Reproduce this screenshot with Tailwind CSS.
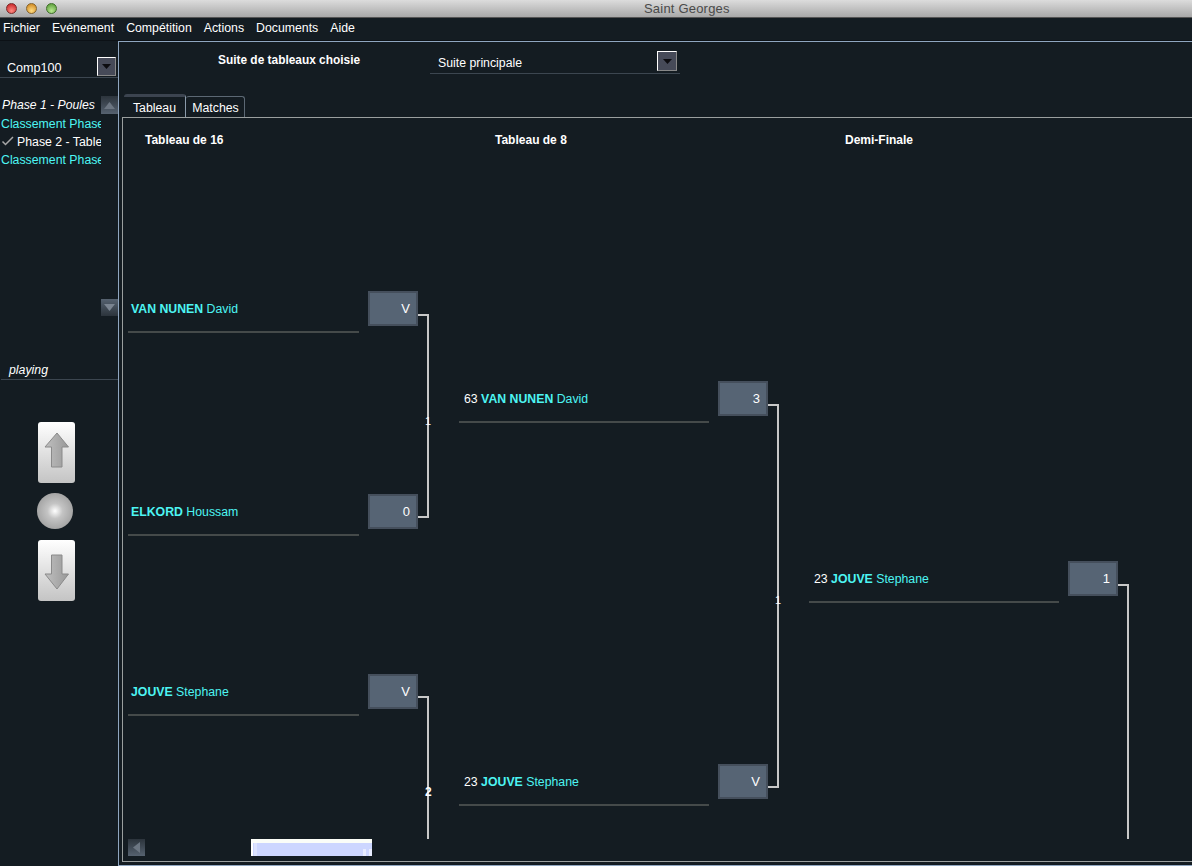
<!DOCTYPE html>
<html lang="fr">
<head>
<meta charset="utf-8">
<title>Saint Georges</title>
<script src="https://cdn.jsdelivr.net/npm/@tailwindcss/browser@4"></script>
</head>
<body class="m-0 bg-[#141c22]">
<div class="w-[1192px] h-[866px] overflow-hidden flex flex-col bg-[#141c22] text-white text-[12.3px] font-['Liberation_Sans',Arial,sans-serif]">
  <!-- title bar -->
  <header class="relative h-[18px] shrink-0 flex items-center bg-gradient-to-b from-[#dcdcdc] to-[#a9a9a9] border-b border-[#555]">
    <div class="flex gap-[9px] pl-[6px]">
      <span class="w-[11px] h-[11px] rounded-full border border-[#7a2a2a] bg-[radial-gradient(circle_at_50%_75%,#ff8a80,#c0181c)]"></span>
      <span class="w-[11px] h-[11px] rounded-full border border-[#86642c] bg-[radial-gradient(circle_at_50%_75%,#ffdc80,#c87c14)]"></span>
      <span class="w-[11px] h-[11px] rounded-full border border-[#3f6f2a] bg-[radial-gradient(circle_at_50%_75%,#b8e890,#4f9430)]"></span>
    </div>
    <span class="ml-[587px] text-[13px] tracking-[0.2px] text-[#4a4a4a]">Saint Georges</span>
  </header>
  <!-- menu bar -->
  <nav class="h-[23px] shrink-0 flex items-center gap-[12px] pl-[3px] pb-[2px] bg-[#141c22] border-b border-[#0c1116]">
    <span>Fichier</span><span>Evénement</span><span>Compétition</span><span>Actions</span><span>Documents</span><span>Aide</span>
  </nav>
  <div class="flex flex-1 min-h-0">
    <!-- sidebar -->
    <aside class="w-[118px] shrink-0 flex flex-col">
      <div class="h-[37px] flex items-end border-b border-[#3c4650] relative">
        <span class="ml-[7px] mb-[1px] text-[12.6px] leading-[16px]">Comp100</span>
        <button class="absolute left-[97px] top-[16px] w-[19px] h-[19px] bg-[#464a58] border-[1.5px] border-t-white border-l-white border-r-[#888] border-b-[#888] flex items-center justify-center">
          <svg width="9" height="5" viewBox="0 0 9 5"><path d="M0 0H9L4.500 5Z" fill="#0c0c10"/></svg>
        </button>
      </div>
      <div class="relative h-[220px] mt-[18px] pr-[17px]">
        <div class="w-[101px] overflow-hidden whitespace-nowrap leading-[18px]">
          <div class="italic pl-[2px] h-[19px] text-[12.2px]">Phase 1 - Poules</div>
          <div class="text-[#4df5f3] pl-[1px]">Classement Phase 1</div>
          <div class="flex items-center pl-[1px]">
            <svg width="13" height="10" viewBox="0 0 13 10" class="shrink-0 mr-[3px] mb-[2px]"><path d="M1.500 5.500L4.500 8.500L12 1" fill="none" stroke="#a8a8a8" stroke-width="1.500"/></svg>
            <span>Phase 2 - Tableau</span>
          </div>
          <div class="text-[#4df5f3] pl-[1px]">Classement Phase 2</div>
        </div>
        <div class="absolute right-0 top-0 w-[17px] h-[18px] flex items-center justify-center bg-gradient-to-b from-[#2c343c] to-[#566270]">
          <svg width="11" height="7" viewBox="0 0 11 7"><path d="M0 7H11L5.500 0Z" fill="#6c7682"/></svg>
        </div>
        <div class="absolute right-0 top-[203px] w-[17px] h-[17px] flex items-center justify-center bg-gradient-to-b from-[#566270] to-[#2c343c]">
          <svg width="11" height="7" viewBox="0 0 11 7"><path d="M0 0H11L5.500 7Z" fill="#7a8490"/></svg>
        </div>
      </div>
      <div class="mt-[45px] h-[19px] pt-[1px] ml-[1px] border-b border-[#3c4650] pl-[8px] italic leading-[16px]">playing</div>
      <div class="flex flex-col items-start pl-[37px] mt-[42px]">
        <button class="w-[37px] h-[61px] ml-[1px] rounded-[3px] bg-gradient-to-b from-white to-[#c4c4c4] flex">
          <svg width="37" height="61" viewBox="0 0 37 61"><defs><linearGradient id="a" x1="0" y1="0" x2="1" y2="0"><stop offset="0" stop-color="#c0c0c0"/><stop offset="1" stop-color="#989898"/></linearGradient></defs><path d="M19 11L30.500 25H24V45H13.500V25H7Z" fill="url(#a)" stroke="#8a8a8a"/></svg>
        </button>
        <div class="w-[36px] h-[36px] mt-[10px] rounded-full bg-[radial-gradient(circle_at_50%_50%,#ffffff_0%,#c4c4c4_30%,#8e8e8e_100%)]"></div>
        <button class="w-[37px] h-[61px] mt-[11px] ml-[1px] rounded-[3px] bg-gradient-to-b from-white to-[#c4c4c4] flex">
          <svg width="37" height="61" viewBox="0 0 37 61"><defs><linearGradient id="b" x1="0" y1="0" x2="1" y2="0"><stop offset="0" stop-color="#c0c0c0"/><stop offset="1" stop-color="#989898"/></linearGradient></defs><path d="M13.500 15H24V34H30.500L19 49L7 34H13.500Z" fill="url(#b)" stroke="#8a8a8a"/></svg>
        </button>
      </div>
    </aside>
    <!-- main -->
    <main class="flex-1 min-w-0 border-l border-t border-b border-[#8fa6c0] pl-[3px] flex flex-col h-[825px]">
      <div class="h-[53px] shrink-0 relative">
        <span class="absolute left-[96px] top-[11px] text-[11.9px] font-bold leading-[15px]">Suite de tableaux choisie</span>
        <div class="absolute left-[308px] top-0 w-[250px] h-[32px] border-b border-[#3c4650]">
          <span class="absolute left-[8px] top-[14px] leading-[15px]">Suite principale</span>
          <button class="absolute left-[227px] top-[9px] w-[20px] h-[20px] bg-[#464a58] border-[1.5px] border-t-white border-l-white border-r-[#888] border-b-[#888] flex items-center justify-center">
            <svg width="9" height="5" viewBox="0 0 9 5"><path d="M0 0H9L4.500 5Z" fill="#0c0c10"/></svg>
          </button>
        </div>
      </div>
      <div class="h-[22px] shrink-0 flex items-end">
        <div class="w-[62px] h-[23px] ml-[2px] border-t-[3px] border-t-[#3c4450] border-r border-r-[#8a9aaa] rounded-t-[3px] flex items-center justify-center leading-[15px] pt-[2px]">Tableau</div>
        <div class="w-[59px] h-[21px] border-t border-r border-[#5c6874] rounded-t-[3px] flex items-center justify-center leading-[15px] pt-[2px] pl-[1px]">Matches</div>
      </div>
      <section class="flex-1 min-h-0 border-t border-l border-b border-[#9a9f9f] relative mb-[3px]">
        <div class="relative h-[721px] overflow-hidden">
          <span class="absolute left-[22px] top-[15px] text-[12px] font-bold leading-[15px]">Tableau de 16</span>
          <span class="absolute left-[372px] top-[15px] text-[12px] font-bold leading-[15px]">Tableau de 8</span>
          <span class="absolute left-[722px] top-[15px] text-[12px] font-bold leading-[15px]">Demi-Finale</span>

          <!-- col 1 -->
          <div class="absolute left-[5px] top-[173px] flex">
            <div class="w-[231px] h-[42px] border-b-2 border-[#454a4a] pl-[3px] pt-[11px] leading-[15px] text-[#4df5f3]"><b>VAN NUNEN</b> David</div>
            <div class="ml-[9px] w-[50px] h-[35px] bg-[#566474] border-2 border-[#454f5c] text-right pr-[6px] pt-[8px] leading-[15px] text-[13px]">V</div>
          </div>
          <div class="absolute left-[5px] top-[376px] flex">
            <div class="w-[231px] h-[42px] border-b-2 border-[#454a4a] pl-[3px] pt-[11px] leading-[15px] text-[#4df5f3]"><b>ELKORD</b> Houssam</div>
            <div class="ml-[9px] w-[50px] h-[35px] bg-[#566474] border-2 border-[#454f5c] text-right pr-[6px] pt-[8px] leading-[15px] text-[13px]">0</div>
          </div>
          <div class="absolute left-[5px] top-[556px] flex">
            <div class="w-[231px] h-[42px] border-b-2 border-[#454a4a] pl-[3px] pt-[11px] leading-[15px] text-[#4df5f3]"><b>JOUVE</b> Stephane</div>
            <div class="ml-[9px] w-[50px] h-[35px] bg-[#566474] border-2 border-[#454f5c] text-right pr-[6px] pt-[8px] leading-[15px] text-[13px]">V</div>
          </div>
          <!-- col 2 -->
          <div class="absolute left-[336px] top-[263px] flex">
            <div class="w-[250px] h-[42px] border-b-2 border-[#454a4a] pl-[5px] pt-[11px] leading-[15px] text-[#4df5f3]"><span class="text-white">63</span> <b>VAN NUNEN</b> David</div>
            <div class="ml-[9px] w-[50px] h-[35px] bg-[#566474] border-2 border-[#454f5c] text-right pr-[6px] pt-[8px] leading-[15px] text-[13px]">3</div>
          </div>
          <div class="absolute left-[336px] top-[646px] flex">
            <div class="w-[250px] h-[42px] border-b-2 border-[#454a4a] pl-[5px] pt-[11px] leading-[15px] text-[#4df5f3]"><span class="text-white">23</span> <b>JOUVE</b> Stephane</div>
            <div class="ml-[9px] w-[50px] h-[35px] bg-[#566474] border-2 border-[#454f5c] text-right pr-[6px] pt-[8px] leading-[15px] text-[13px]">V</div>
          </div>
          <!-- col 3 -->
          <div class="absolute left-[686px] top-[443px] flex">
            <div class="w-[250px] h-[42px] border-b-2 border-[#454a4a] pl-[5px] pt-[11px] leading-[15px] text-[#4df5f3]"><span class="text-white">23</span> <b>JOUVE</b> Stephane</div>
            <div class="ml-[9px] w-[50px] h-[35px] bg-[#566474] border-2 border-[#454f5c] text-right pr-[6px] pt-[8px] leading-[15px] text-[13px]">1</div>
          </div>
          <!-- connectors -->
          <div class="absolute left-[295px] top-[196px] w-[11px] h-[204px] border-t-2 border-r-2 border-b-2 border-[#c8c8c8]"></div>
          <div class="absolute left-[295px] top-[578px] w-[11px] h-[143px] border-t-2 border-r-2 border-[#c8c8c8]"></div>
          <div class="absolute left-[645px] top-[286px] w-[11px] h-[384px] border-t-2 border-r-2 border-b-2 border-[#c8c8c8]"></div>
          <div class="absolute left-[995px] top-[466px] w-[11px] h-[255px] border-t-2 border-r-2 border-[#c8c8c8]"></div>
          <span class="absolute left-[302px] top-[296px] leading-[14px] text-[11px]">1</span>
          <span class="absolute left-[302px] top-[667px] leading-[14px] text-[12px] font-bold">2</span>
          <span class="absolute left-[652px] top-[475px] leading-[14px] text-[11px]">1</span>
        </div>
        <!-- horizontal scrollbar -->
        <div class="relative h-[17px]">
          <div class="absolute left-[5px] top-0 w-[17px] h-[17px] flex items-center justify-center bg-gradient-to-b from-[#2c343c] to-[#566270]">
            <svg width="7" height="11" viewBox="0 0 7 11"><path d="M7 0V11L0 5.500Z" fill="#6c7682"/></svg>
          </div>
          <div class="absolute left-[128px] top-0 w-[121px] h-[17px] bg-[#cdd6ff] border-t-[4px] border-t-[#fbfdf8] border-l-[2px] border-l-white flex justify-between">
            <span class="w-[3px] bg-[#dde3ff] ml-[1px]"></span>
            <span class="w-[9px] border-x-[3px] border-[#e8ecff] mt-[6px]"></span>
          </div>
        </div>
      </section>
    </main>
  </div>
</div>
</body>
</html>
